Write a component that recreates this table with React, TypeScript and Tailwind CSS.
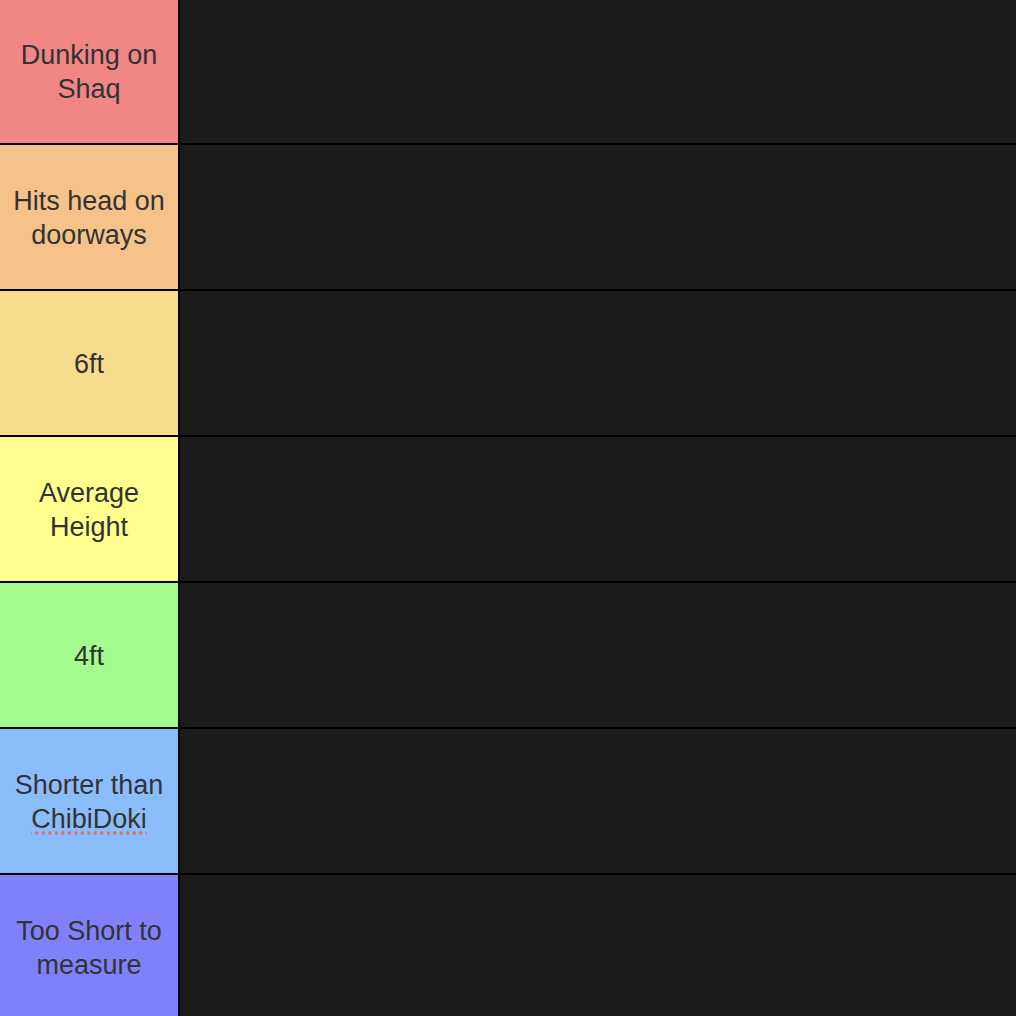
import React from "react";

const tiers: { label: React.ReactNode; color: string }[] = [
  { label: "Dunking on Shaq", color: "bg-[#f08784]" },
  { label: "Hits head on doorways", color: "bg-[#f5c28a]" },
  { label: "6ft", color: "bg-[#f8dc8e]" },
  { label: "Average Height", color: "bg-[#fdfe8e]" },
  { label: "4ft", color: "bg-[#a3fc8e]" },
  {
    label: (
      <>
        Shorter than{" "}
        <span className="pb-[2px] bg-[radial-gradient(circle,#e07070_1.5px,transparent_2px)] bg-[length:6.5px_6px] bg-repeat-x bg-bottom">
          ChibiDoki
        </span>
      </>
    ),
    color: "bg-[#8cbdfb]",
  },
  { label: "Too Short to measure", color: "bg-[#8080fb]" },
];

export default function App() {
  return (
    <div className="w-[1016px] h-[1016px] overflow-hidden bg-[#1b1b1b]">
      <div className="-mt-px flex flex-col">
        {tiers.map((t, i) => (
          <div key={i} className="flex h-[146px] shrink-0 border-b-2 border-black">
            <div
              className={`${t.color} w-[180px] shrink-0 border-r-2 border-black flex items-center justify-center px-[7px] pt-[2px] text-center text-[27px] leading-[34px] text-[#333333]`}
              style={{ fontFamily: '"Liberation Sans", Arial, sans-serif' }}
            >
              <span>{t.label}</span>
            </div>
            <div className="flex-1 bg-[#1b1b1b]" />
          </div>
        ))}
      </div>
    </div>
  );
}
